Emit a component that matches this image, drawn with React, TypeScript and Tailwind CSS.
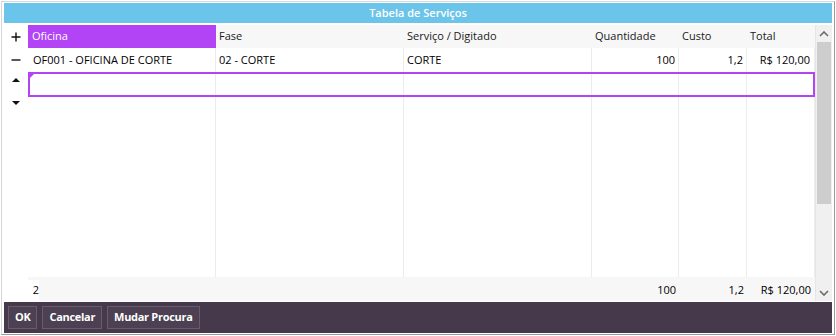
const cols = [
  { key: "oficina", label: "Oficina", w: "w-[188px]", align: "left" },
  { key: "fase", label: "Fase", w: "w-[188px]", align: "left" },
  { key: "servico", label: "Serviço / Digitado", w: "w-[188px]", align: "left" },
  { key: "qtd", label: "Quantidade", w: "w-[87px]", align: "right" },
  { key: "custo", label: "Custo", w: "w-[68px]", align: "right" },
  { key: "total", label: "Total", w: "w-[68px]", align: "right" },
];

const row: Record<string, string> = {
  oficina: "OF001 - OFICINA DE CORTE",
  fase: "02 - CORTE",
  servico: "CORTE",
  qtd: "100",
  custo: "1,2",
  total: "R$ 120,00",
};

function GutterIcon({ kind }: { kind: "plus" | "minus" | "up" | "down" }) {
  return (
    <svg width="10" height="10" viewBox="0 0 10 10" className="block">
      {kind === "plus" && <path d="M5 0.5v9M0.5 5h9" stroke="#111" strokeWidth="1.4" />}
      {kind === "minus" && <path d="M0.5 5h9" stroke="#111" strokeWidth="1.4" />}
      {kind === "up" && <path d="M1 7h8L5 3z" fill="#111" />}
      {kind === "down" && <path d="M1 3h8L5 7z" fill="#111" />}
    </svg>
  );
}

function Chevron({ up }: { up?: boolean }) {
  return (
    <svg width="10" height="6" viewBox="0 0 10 6" className="block">
      <path
        d={up ? "M1 5L5 1l4 4" : "M1 1l4 4 4-4"}
        fill="none"
        stroke="#6a6a6a"
        strokeWidth="1.6"
      />
    </svg>
  );
}

function Button({ children }: { children: React.ReactNode }) {
  return (
    <button className="h-[23px] rounded-none border border-[#675b6c] bg-[#4c4052] px-[6px] text-[11px] font-bold tracking-[-0.3px] text-white">
      {children}
    </button>
  );
}

export default function App() {
  return (
    <div
      className="h-[336px] w-[836px] bg-white p-px text-black"
      style={{ fontFamily: '"Open Sans", "Noto Sans", sans-serif' }}
    >
      <div className="flex h-[334px] flex-col border border-[#d6d6d6] border-r-[#9a9a9a] border-b-[#9a9a9a] px-[2px] pt-px pb-px">
        <div className="flex h-[20px] items-center justify-center bg-[#6bc4e9] text-[11px] font-semibold text-white">
          Tabela de Serviços
        </div>

        <div className="mt-[2px] flex h-[276px]">
          {/* left gutter */}
          <div className="flex w-[24px] flex-col items-center">
            <div className="flex h-[23px] items-center">
              <GutterIcon kind="plus" />
            </div>
            <div className="flex h-[24px] items-center">
              <GutterIcon kind="minus" />
            </div>
            <div className="flex h-[13px] items-end">
              <GutterIcon kind="up" />
            </div>
            <div className="mt-[13px]">
              <GutterIcon kind="down" />
            </div>
          </div>

          {/* grid */}
          <div className="flex w-[787px] flex-col text-[11px]">
            <div className="flex h-[23px] bg-[#f7f7f7] text-[#1a1a1a]">
              {cols.map((c, i) => (
                <div
                  key={c.key}
                  className={`${c.w} flex items-center ${
                    i === 0 ? "bg-[#b244f5] pl-[4px] text-white" : "pl-[3px]"
                  }`}
                >
                  {c.label}
                </div>
              ))}
            </div>

            <div className="flex h-[24px]">
              {cols.map((c, i) => (
                <div
                  key={c.key}
                  className={`${c.w} flex items-center border-r border-[#ececec] ${
                    c.align === "right" ? "justify-end" : ""
                  } ${i === 0 ? "pl-[5px]" : "pl-[3px]"} ${
                    i === cols.length - 1 ? "pr-[4px]" : "pr-[3px]"
                  }`}
                >
                  {row[c.key]}
                </div>
              ))}
            </div>

            <div className="relative flex h-[25px] border-2 border-[#b244f5]">
              <span className="absolute top-0 left-0 h-0 w-0 border-t-[4px] border-r-[4px] border-t-[#b244f5] border-r-transparent" />
              <div className="w-[186px] border-r border-[#ececec]" />
              <div className="w-[188px] border-r border-[#ececec]" />
              <div className="w-[188px] border-r border-[#ececec]" />
              <div className="w-[87px] border-r border-[#ececec]" />
              <div className="w-[68px] border-r border-[#ececec]" />
              <div className="w-[66px]" />
            </div>

            <div className="flex flex-1">
              {cols.map((c) => (
                <div key={c.key} className={`${c.w} border-r border-[#ececec]`} />
              ))}
            </div>

            <div className="flex h-[24px] bg-[#f7f7f7]">
              <div className="flex w-[188px] items-end">
                <span className="flex h-[21px] w-[11px] items-center justify-end bg-white pl-[3px]">2</span>
              </div>
              <div className="w-[188px]" />
              <div className="w-[188px]" />
              {cols.slice(3).map((c, i) => (
                <div
                  key={c.key}
                  className={`${c.w} flex items-center justify-end pt-[2px] ${
                    i === 2 ? "pr-[4px]" : "pr-[3px]"
                  }`}
                >
                  {row[c.key]}
                </div>
              ))}
            </div>
          </div>

          {/* scrollbar */}
          <div className="flex w-[17px] flex-col items-center border-l border-[#e6e6e6] bg-[#f0f0f0]">
            <div className="flex h-[17px] items-center">
              <Chevron up />
            </div>
            <div className="h-[162px] w-[14px] bg-[#cdcdcd]" />
            <div className="flex-1" />
            <div className="flex h-[16px] items-center">
              <Chevron />
            </div>
          </div>
        </div>

        <div className="mt-px flex flex-1 items-center gap-[5px] bg-[#45394b] px-[4px]">
          <Button>OK</Button>
          <Button>Cancelar</Button>
          <Button>Mudar Procura</Button>
        </div>
      </div>
    </div>
  );
}
